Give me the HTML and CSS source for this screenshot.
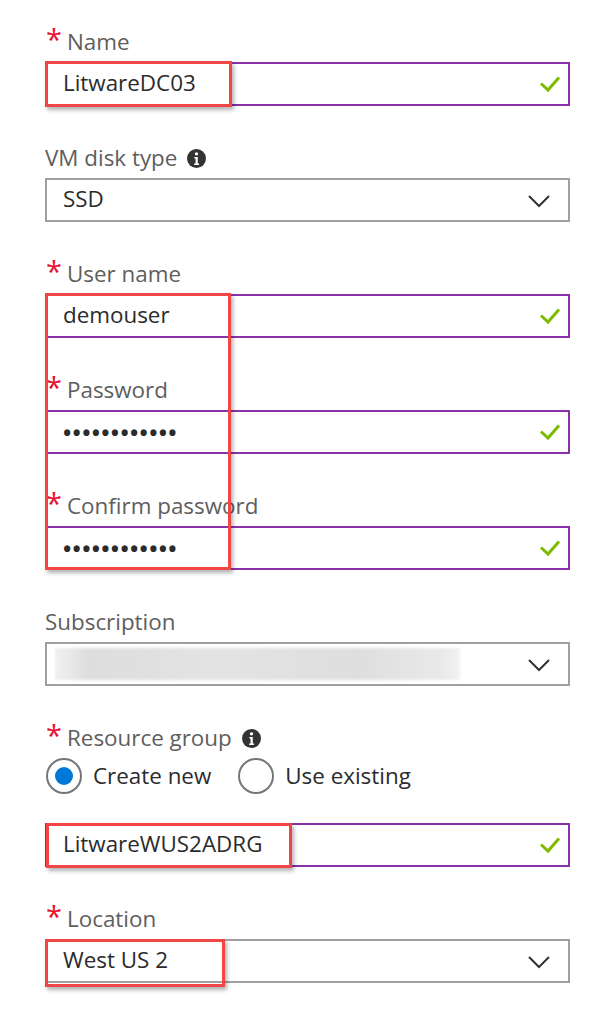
FILE: index.html
```html
<!DOCTYPE html>
<html lang="en">
<head>
<meta charset="utf-8">
<title>Create VM</title>
<link rel="stylesheet" href="styles.css">
</head>
<body>
<div class="form">
  <div class="field">
    <div class="label"><span class="req">*</span><span class="label-text">Name</span></div>
    <div class="box valid"><span class="value">LitwareDC03</span>
      <svg class="check" width="22" height="18" viewBox="0 0 22 18"><polyline points="2,8.5 9,15 20,2.5" fill="none" stroke="#7fba00" stroke-width="3"/></svg>
    </div>
  </div>

  <div class="field">
    <div class="label"><span class="label-text">VM disk type</span>
      <svg class="info" width="19" height="19" viewBox="0 0 18 18"><circle cx="9" cy="9" r="9" fill="#333"/><circle cx="9" cy="4.6" r="1.6" fill="#fff"/><path d="M7 7.6h3.2v6.2h1.2v1.4H6.8v-1.4h1.3V9H7z" fill="#fff"/></svg>
    </div>
    <div class="box select"><span class="value">SSD</span>
      <svg class="chev" width="24" height="14" viewBox="0 0 24 14"><polyline points="2,2 12,12 22,2" fill="none" stroke="#333" stroke-width="2"/></svg>
    </div>
  </div>

  <div class="field">
    <div class="label"><span class="req">*</span><span class="label-text">User name</span></div>
    <div class="box valid"><span class="value">demouser</span>
      <svg class="check" width="22" height="18" viewBox="0 0 22 18"><polyline points="2,8.5 9,15 20,2.5" fill="none" stroke="#7fba00" stroke-width="3"/></svg>
    </div>
  </div>

  <div class="field">
    <div class="label"><span class="req">*</span><span class="label-text">Password</span></div>
    <div class="box valid"><span class="value dots">••••••••••••</span>
      <svg class="check" width="22" height="18" viewBox="0 0 22 18"><polyline points="2,8.5 9,15 20,2.5" fill="none" stroke="#7fba00" stroke-width="3"/></svg>
    </div>
  </div>

  <div class="field">
    <div class="label"><span class="req">*</span><span class="label-text">Confirm password</span></div>
    <div class="box valid"><span class="value dots">••••••••••••</span>
      <svg class="check" width="22" height="18" viewBox="0 0 22 18"><polyline points="2,8.5 9,15 20,2.5" fill="none" stroke="#7fba00" stroke-width="3"/></svg>
    </div>
  </div>

  <div class="field">
    <div class="label"><span class="label-text">Subscription</span></div>
    <div class="box select"><span class="blurred"></span>
      <svg class="chev" width="24" height="14" viewBox="0 0 24 14"><polyline points="2,2 12,12 22,2" fill="none" stroke="#333" stroke-width="2"/></svg>
    </div>
  </div>

  <div class="field">
    <div class="label"><span class="req">*</span><span class="label-text">Resource group</span>
      <svg class="info" width="19" height="19" viewBox="0 0 18 18"><circle cx="9" cy="9" r="9" fill="#333"/><circle cx="9" cy="4.6" r="1.6" fill="#fff"/><path d="M7 7.6h3.2v6.2h1.2v1.4H6.8v-1.4h1.3V9H7z" fill="#fff"/></svg>
    </div>
    <div class="radios">
      <div class="radio"><span class="circle on"><span class="dot"></span></span><span class="radio-text">Create new</span></div>
      <div class="radio"><span class="circle"></span><span class="radio-text">Use existing</span></div>
    </div>
    <div class="box valid"><span class="value">LitwareWUS2ADRG</span>
      <svg class="check" width="22" height="18" viewBox="0 0 22 18"><polyline points="2,8.5 9,15 20,2.5" fill="none" stroke="#7fba00" stroke-width="3"/></svg>
    </div>
  </div>

  <div class="field">
    <div class="label"><span class="req">*</span><span class="label-text">Location</span></div>
    <div class="box select"><span class="value">West US 2</span>
      <svg class="chev" width="24" height="14" viewBox="0 0 24 14"><polyline points="2,2 12,12 22,2" fill="none" stroke="#333" stroke-width="2"/></svg>
    </div>
  </div>

  <div class="mark mark-name"></div>
  <div class="mark mark-creds"></div>
  <div class="mark mark-rg"></div>
  <div class="mark mark-loc"></div>
</div>
</body>
</html>
```

FILE: styles.css
```css
html, body {
  margin: 0;
  padding: 0;
  background: #fff;
}

body {
  font-family: "Open Sans", "Noto Sans", sans-serif;
  font-size: 22.4px;
  color: #333;
}

.form {
  position: relative;
  width: 525px;
  padding: 28px 0 0 45px;
}

.field {
  margin-bottom: 38px;
}

.label {
  display: flex;
  align-items: center;
  height: 28px;
  line-height: 28px;
  margin-bottom: 6px;
  color: #5e5e5e;
}

.req {
  align-self: flex-start;
  width: 22px;
  font-size: 29px;
  line-height: 22px;
  height: 28px;
  color: #e8112d;
  padding-left: 1px;
  box-sizing: border-box;
}

.info {
  margin-left: 10px;
  flex: none;
}

.box {
  display: flex;
  align-items: center;
  height: 40px;
  padding: 0 0 0 16px;
  border: 2px solid #a0a0a0;
  color: #2b2b2b;
}

.box.valid {
  border-color: #8a30a8;
  padding-right: 7px;
}

.box.select {
  padding-right: 17px;
}

.value {
  white-space: nowrap;
  line-height: 28px;
  margin-top: -2px;
}

.dots {
  letter-spacing: 1.3px;
  font-size: 22px;
  font-weight: 700;
  margin-top: 0;
}

.check,
.chev {
  margin-left: auto;
  flex: none;
}

.chev {
  margin-top: 2px;
}

.blurred {
  display: block;
  width: 405px;
  height: 32px;
  margin-left: -8px;
  background: linear-gradient(90deg, #f1f1f1 0%, #dddddd 8%, #e3e3e3 40%, #dedede 75%, #e9e9e9 95%, #f1f1f1 100%);
  filter: blur(1.5px);
}

.radios {
  display: flex;
  align-items: center;
  gap: 27px;
  margin: 4px 0 29px 1px;
  height: 36px;
}

.radio {
  display: flex;
  align-items: center;
  gap: 11px;
}

.circle {
  display: flex;
  align-items: center;
  justify-content: center;
  width: 32px;
  height: 32px;
  border: 2px solid #767676;
  border-radius: 50%;
}

.dot {
  width: 18px;
  height: 18px;
  border-radius: 50%;
  background: #0078d7;
}

.radio-text {
  color: #2b2b2b;
  line-height: 28px;
}

.mark {
  position: absolute;
  border: 3px solid #f04646;
  box-shadow: 2px 3px 4px rgba(0, 0, 0, 0.3);
  box-sizing: border-box;
}

.mark-name {
  left: 45px;
  top: 61px;
  width: 187px;
  height: 46px;
}

.mark-creds {
  left: 45px;
  top: 293px;
  width: 186px;
  height: 277px;
}

.mark-rg {
  left: 46px;
  top: 823px;
  width: 246px;
  height: 45px;
}

.mark-loc {
  left: 45px;
  top: 939px;
  width: 180px;
  height: 48px;
}
```
